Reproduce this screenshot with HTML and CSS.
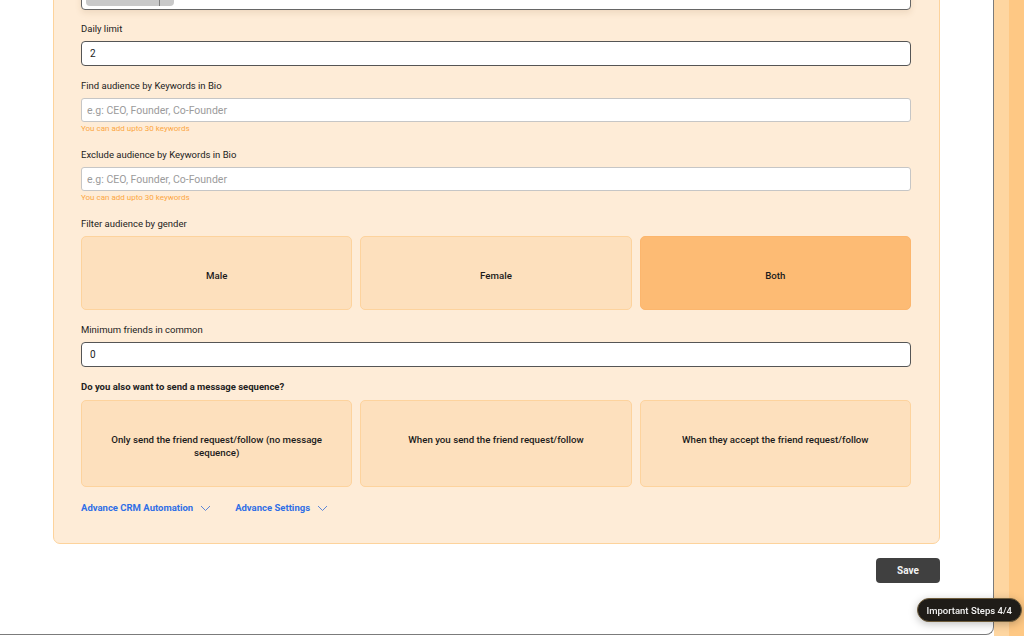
FILE: index.html
```html
<!DOCTYPE html>
<html lang="en">
<head>
  <meta charset="UTF-8" />
  <meta name="viewport" content="width=device-width, initial-scale=1.0" />
  <title>Campaign Settings</title>
  <link rel="stylesheet" href="styles.css">
</head>
<body>
  <div class="layout">
    <div class="modal">
      <div class="card">
        <!-- tag input (scrolled mostly out of view) -->
        <div class="tag-input">
          <span class="tag"><span class="tag-text"></span><span class="tag-close"></span></span>
        </div>

        <div class="field">
          <label>Daily limit</label>
          <input class="text-input dark" value="2">
        </div>

        <div class="field">
          <label>Find audience by Keywords in Bio</label>
          <input class="text-input" placeholder="e.g: CEO, Founder, Co-Founder">
          <div class="hint">You can add upto 30 keywords</div>
        </div>

        <div class="field">
          <label>Exclude audience by Keywords in Bio</label>
          <input class="text-input" placeholder="e.g: CEO, Founder, Co-Founder">
          <div class="hint">You can add upto 30 keywords</div>
        </div>

        <div class="field">
          <label>Filter audience by gender</label>
          <div class="choices gender">
            <button class="choice">Male</button>
            <button class="choice">Female</button>
            <button class="choice selected">Both</button>
          </div>
        </div>

        <div class="field">
          <label>Minimum friends in common</label>
          <input class="text-input dark" value="0">
        </div>

        <div class="field">
          <label class="strong">Do you also want to send a message sequence?</label>
          <div class="choices sequence">
            <button class="choice">Only send the friend request/follow (no message sequence)</button>
            <button class="choice">When you send the friend request/follow</button>
            <button class="choice">When they accept the friend request/follow</button>
          </div>
        </div>

        <div class="toggles">
          <a class="toggle" href="#">Advance CRM Automation
            <svg width="11" height="7" viewBox="0 0 11 7"><path d="M1 1l4.5 4.5L10 1" fill="none" stroke="currentColor" stroke-width="1"/></svg>
          </a>
          <a class="toggle" href="#">Advance Settings
            <svg width="11" height="7" viewBox="0 0 11 7"><path d="M1 1l4.5 4.5L10 1" fill="none" stroke="currentColor" stroke-width="1"/></svg>
          </a>
        </div>
      </div>

      <div class="actions">
        <button class="save">Save</button>
      </div>
    </div>
    <div class="strip light"></div>
    <div class="strip deep"></div>
  </div>

  <div class="steps-pill">Important Steps 4/4</div>
</body>
</html>
```

FILE: styles.css
```css
html, body {
  margin: 0;
  height: 100%;
  overflow: hidden;
}

body {
  font-family: Roboto, "Liberation Sans", sans-serif;
  background-color: #ffffff;
  color: #222;
}

.layout {
  display: flex;
  align-items: flex-start;
}

.modal {
  width: 994px;
  padding: 0 53px 51px 53px;
  margin-top: -53px;
  background-color: #fff;
  border-right: 1px solid #7b7b7b;
  border-bottom: 1px solid #7b7b7b;
  border-bottom-right-radius: 8px;
  flex-shrink: 0;
  box-sizing: border-box;
}

.strip {
  width: 15px;
  height: 100vh;
}

.strip.light {
  background-color: #fed6a1;
}

.strip.deep {
  background-color: #fec884;
}

.card {
  background-color: #feecd7;
  border: 1px solid #fdd39c;
  border-radius: 7px;
  padding: 28px 28px 29px 27px;
}

.tag-input {
  height: 34px;
  box-sizing: border-box;
  border: 1px solid #666;
  border-radius: 4px;
  background: #fff;
  box-shadow: 0 3px 6px rgba(120, 80, 30, 0.12);
  padding: 0 4px;
  margin-bottom: 13px;
}

.tag {
  display: flex;
  width: 88px;
  height: 29px;
  background-color: #c9c9c9;
  border-radius: 0 0 4px 4px;
}

.tag-text {
  width: 73px;
  border-right: 1px solid #7e7e7e;
}

.field {
  margin-bottom: 14px;
}

label {
  display: block;
  font-size: 9.5px;
  line-height: 12px;
  color: #222;
  margin-bottom: 6px;
}

label.strong {
  font-weight: 700;
  margin-bottom: 7px;
}

.text-input {
  display: block;
  width: 100%;
  height: 24px;
  box-sizing: border-box;
  border: 1px solid #c6c6c6;
  border-radius: 3px;
  padding: 0 5px;
  font-family: Roboto, "Liberation Sans", sans-serif;
  font-size: 10.5px;
  color: #222;
  background: #fff;
  outline: none;
}

.text-input.dark {
  height: 25px;
  border-color: #555;
  border-radius: 4px;
  padding: 0 8px;
  font-size: 10px;
}

.text-input::placeholder {
  color: #9b9b9b;
}

.hint {
  font-size: 8px;
  line-height: 10px;
  margin-top: 2px;
  color: #fca744;
}

.field:has(.hint) {
  margin-bottom: 15px;
}

.choices {
  display: grid;
  grid-template-columns: 1fr 1fr 1fr;
  gap: 8px;
}

.choice {
  display: flex;
  justify-content: center;
  align-items: flex-start;
  text-align: center;
  box-sizing: border-box;
  border: 1px solid #fdd39d;
  border-radius: 5px;
  background-color: #fde0bd;
  font-family: Roboto, "Liberation Sans", sans-serif;
  font-size: 9.7px;
  font-weight: 500;
  line-height: 13px;
  color: #1b1b1b;
  padding: 32px 26px 0;
  cursor: pointer;
}

.gender .choice {
  height: 74px;
}

.sequence .choice {
  height: 87px;
}

.choice.selected {
  background-color: #fdbb74;
  border-color: #fcb66d;
}

.toggles {
  display: flex;
  gap: 24px;
  padding-top: 1px;
}

.toggle {
  display: flex;
  align-items: center;
  gap: 7px;
  font-size: 9.5px;
  line-height: 12px;
  font-weight: 700;
  color: #2f6fe6;
  text-decoration: none;
}

.toggle svg {
  color: #5d86d8;
}

.actions {
  display: flex;
  justify-content: flex-end;
  margin-top: 14px;
}

.save {
  width: 64px;
  height: 25px;
  border: none;
  border-radius: 4px;
  background-color: #404040;
  color: #f2f2f2;
  font-family: Roboto, "Liberation Sans", sans-serif;
  font-size: 10px;
  font-weight: 700;
  cursor: pointer;
}

.steps-pill {
  position: fixed;
  right: 2px;
  bottom: 14px;
  height: 22px;
  padding: 0 9px;
  display: flex;
  align-items: center;
  border: 1px solid #6e5c3b;
  border-radius: 13px;
  background-color: #1f1c18;
  color: #f4f4f4;
  font-size: 9.5px;
  font-weight: 500;
  box-shadow: 0 2px 8px rgba(0, 0, 0, 0.25);
}
```
